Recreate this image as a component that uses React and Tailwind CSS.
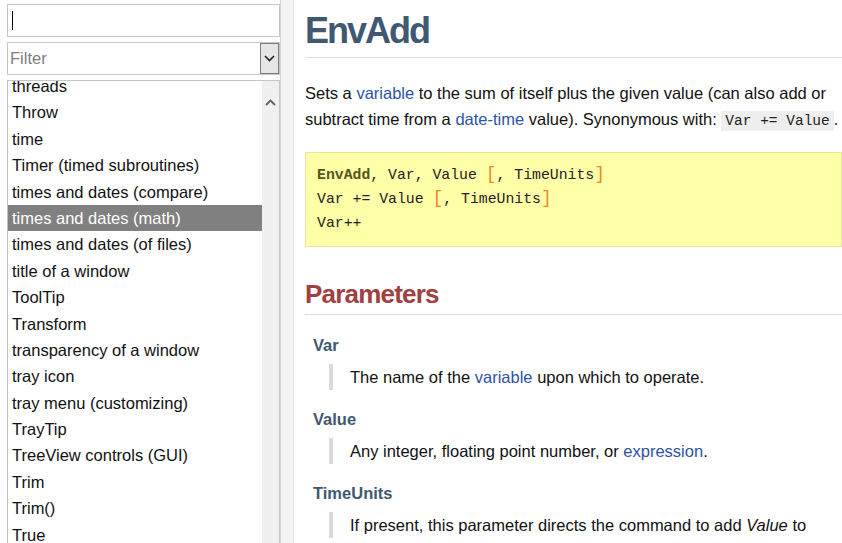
import React from 'react';

const topics = [
  'threads',
  'Throw',
  'time',
  'Timer (timed subroutines)',
  'times and dates (compare)',
  'times and dates (math)',
  'times and dates (of files)',
  'title of a window',
  'ToolTip',
  'Transform',
  'transparency of a window',
  'tray icon',
  'tray menu (customizing)',
  'TrayTip',
  'TreeView controls (GUI)',
  'Trim',
  'Trim()',
  'True',
];

const Bracket = ({ children }) => (
  <span className="text-[#e8892b] text-[18px] leading-none font-light">{children}</span>
);

const Sidebar = () => (
  <div className="w-[280px] shrink-0 flex flex-col pl-[7px] pt-[4px] h-full">
    {/* search box with caret */}
    <div className="h-[33px] border border-[#c6c6c6] flex items-center pl-[4px]">
      <div className="w-px h-[19px] bg-black" />
    </div>

    {/* filter combo */}
    <div className="mt-[5px] h-[33px] border border-[#c6c6c6] flex">
      <div className="flex-1 pl-[2px] text-[16.5px] leading-[31px] text-[#7d7d7d]">Filter</div>
      <div className="w-[19px] bg-[#e6e6e6] border border-[#7c7c7c] flex items-center justify-center">
        <svg width="11" height="7" viewBox="0 0 11 7">
          <path d="M1 1l4.5 4.5L10 1" fill="none" stroke="#222" strokeWidth="1.6" />
        </svg>
      </div>
    </div>

    {/* topic list */}
    <div className="mt-[5px] flex-1 border border-[#c6c6c6] border-b-0 flex overflow-hidden">
      <div className="flex-1 overflow-hidden">
        <div className="mt-[-8px]">
          {topics.map((t) => (
            <div
              key={t}
              className={`h-[26.4px] leading-[26.4px] pl-[4px] text-[16.5px] whitespace-nowrap ${
                t === 'times and dates (math)' ? 'bg-[#808080] text-white' : 'text-[#111]'
              }`}
            >
              {t}
            </div>
          ))}
        </div>
      </div>
      <div className="w-[17px] bg-[#f0f0f0] flex justify-center pt-[18px]">
        <svg width="11" height="7" viewBox="0 0 11 7">
          <path d="M1 6l4.5-4.5L10 6" fill="none" stroke="#606060" strokeWidth="1.8" />
        </svg>
      </div>
    </div>
  </div>
);

const Param = ({ name, children }) => (
  <div>
    <div className="pl-[8px] text-[16.5px] leading-[26px] font-bold text-[#405871]">{name}</div>
    <div className="mt-[6px] ml-[24px] border-l-4 border-[#dadada] pl-[17px] text-[16.5px] leading-[26px] text-[#111]">
      {children}
    </div>
  </div>
);

const App = () => {
  return (
    <div className="flex h-[543px] w-[842px] overflow-hidden bg-white font-['Liberation_Sans',Arial,sans-serif]">
      <Sidebar />

      {/* splitter */}
      <div className="w-[14px] shrink-0 bg-[#f3f3f3] border-l border-[#d4d4d4] border-r border-r-[#e6e6e6]" />

      {/* content */}
      <div className="flex-1 pl-[11px] overflow-hidden">
        <h1 className="mt-[9px] pb-[4px] border-b border-[#dcdcdc] text-[36px] leading-[44px] font-bold tracking-[-2px] text-[#405871]">
          EnvAdd
        </h1>

        <p className="mt-[22px] text-[16.5px] leading-[26px] text-[#111]">
          Sets a <span className="text-[#2c53a6]">variable</span> to the sum of itself plus the given value (can also add or
          subtract time from a <span className="text-[#2c53a6]">date-time</span> value). Synonymous with:{' '}
          <code className="bg-[#eeeeee] px-[4px] py-[2px] font-['Liberation_Mono',monospace] text-[14.5px] text-[#222]">
            Var += Value
          </code>
          .
        </p>

        <pre className="mt-[18px] bg-[#ffffa8] border border-[#e6e6a2] pl-[11px] pt-[10px] pb-[11px] font-['Liberation_Mono',monospace] text-[14.8px] leading-[24px] text-[#222]">
          <div>
            <span className="font-bold text-[#55551f]">EnvAdd</span>, Var, Value <Bracket>[</Bracket>, TimeUnits<Bracket>]</Bracket>
          </div>
          <div>
            Var += Value <Bracket>[</Bracket>, TimeUnits<Bracket>]</Bracket>
          </div>
          <div>Var++</div>
        </pre>

        <h2 className="mt-[31px] pb-[4px] border-b border-[#dcdcdc] text-[26px] leading-[32px] font-bold tracking-[-0.8px] text-[#a04040]">
          Parameters
        </h2>

        <div className="mt-[17px] flex flex-col gap-[16px]">
          <Param name="Var">
            The name of the <span className="text-[#2c53a6]">variable</span> upon which to operate.
          </Param>
          <Param name="Value">
            Any integer, floating point number, or <span className="text-[#2c53a6]">expression</span>.
          </Param>
          <Param name="TimeUnits">
            If present, this parameter directs the command to add <i>Value</i> to
          </Param>
        </div>
      </div>
    </div>
  );
};

export default App;
